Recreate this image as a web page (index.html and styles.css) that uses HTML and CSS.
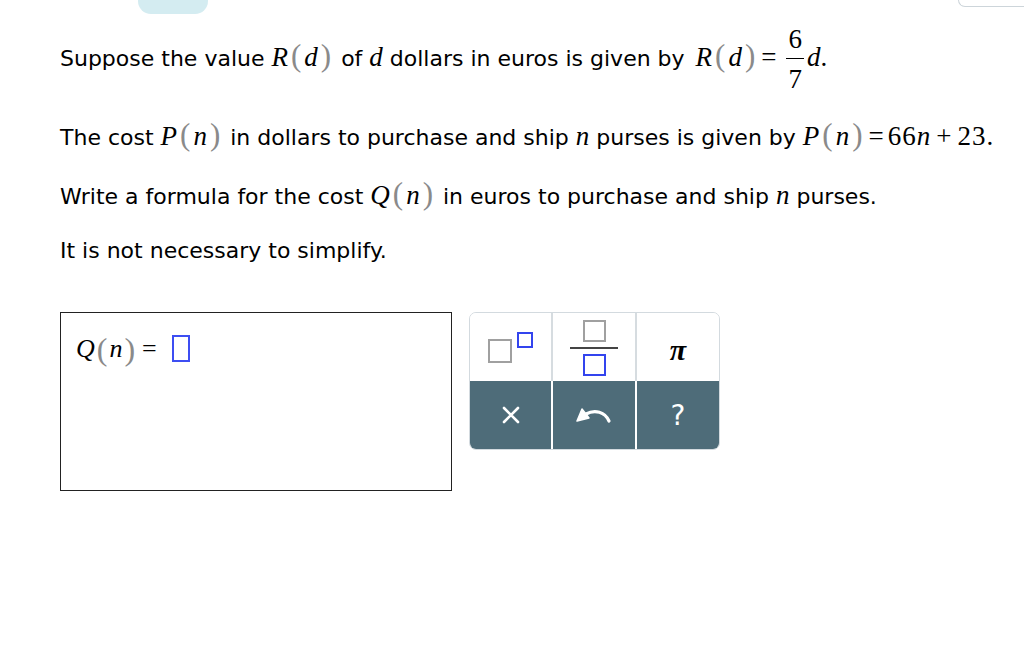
FILE: index.html
```html
<!DOCTYPE html>
<html>
<head>
<meta charset="utf-8">
<link rel="stylesheet" href="styles.css">
</head>
<body>
<header class="top">
  <div class="tab"></div>
  <div class="corner"></div>
</header>
<main class="question">
  <p class="line l1">Suppose the value <span class="m">R<span class="pr">(</span>d<span class="pr">)</span></span> of <span class="m">d</span> dollars in euros is given by <span class="m r2">R<span class="pr">(</span>d<span class="pr">)</span><span class="op">=</span><span class="frac"><span class="fn">6</span><span class="fd">7</span></span>d<span class="up">.</span></span></p>
  <p class="line l2">The cost <span class="m">P<span class="pr">(</span>n<span class="pr">)</span></span> in dollars to purchase and ship <span class="m">n</span> purses is given by <span class="m">P<span class="pr">(</span>n<span class="pr">)</span><span class="op">=</span><span class="up num">66</span>n<span class="op plus">+</span><span class="up num">23.</span></span></p>
  <p class="line l3">Write a formula for the cost <span class="m">Q<span class="pr">(</span>n<span class="pr">)</span></span> in euros to purchase and ship <span class="m">n</span> purses.</p>
  <p class="line l4">It is not necessary to simplify.</p>
</main>
<section class="answer-row">
  <div class="answer-box">
    <span class="am">Q</span><span class="apr">(</span><span class="am">n</span><span class="apr">)</span><span class="aeq">=</span><span class="slot"></span>
  </div>
  <div class="keypad">
    <div class="key top-key">
      <span class="sup-icon"><span class="gbox big"></span><span class="bbox small"></span></span>
    </div>
    <div class="key top-key div-l">
      <span class="frac-icon"><span class="gbox fbox"></span><span class="fbar"></span><span class="bbox fbox"></span></span>
    </div>
    <div class="key top-key div-l"><span class="pi">π</span></div>
    <div class="key dark-key">
      <svg width="18" height="18" viewBox="0 0 18 18"><path d="M2 2 L16 16 M16 2 L2 16" stroke="#fff" stroke-width="2.6" stroke-linecap="round"/></svg>
    </div>
    <div class="key dark-key div-w">
      <svg width="40" height="22" viewBox="0 0 40 22"><path d="M35 17 C 31 8, 21 5, 12 10" fill="none" stroke="#fff" stroke-width="3.2" stroke-linecap="round"/><polygon points="3,17 8,5 15,14" fill="#fff" stroke="#fff" stroke-width="1.5" stroke-linejoin="round"/></svg>
    </div>
    <div class="key dark-key div-w"><span class="qm">?</span></div>
  </div>
</section>
</body>
</html>
```
FILE: styles.css
```css
body {
  margin: 0;
  background: #fff;
  color: #000;
  font-family: "DejaVu Sans", Verdana, sans-serif;
  font-size: 22px;
}
.top {
  display: flex;
  justify-content: space-between;
  height: 14px;
}
.tab {
  margin-left: 138px;
  width: 70px;
  height: 14px;
  background: #d4ecf1;
  border-radius: 0 0 13px 13px;
}
.corner {
  width: 65px;
  height: 6px;
  border: 1px solid #cdd5da;
  border-top: none;
  border-right: none;
  border-radius: 0 0 0 8px;
}
.question {
  padding-left: 60px;
}
.line {
  margin: 0;
  line-height: 30px;
  white-space: nowrap;
}
.l1 { margin-top: 5px; line-height: 80px; }
.l2 { margin-top: 24px; }
.l3 { margin-top: 29px; }
.l4 { margin-top: 24px; }
.m {
  font-family: "Liberation Serif", "Times New Roman", serif;
  font-style: italic;
  font-size: 27px;
  line-height: 20px;
}
.r2 { margin-left: 4px; }
.up { font-style: normal; }
.num { letter-spacing: 1px; }
.pr {
  font-style: normal;
  color: #8a8a8a;
  font-size: 31px;
  line-height: 20px;
  padding: 0 3px;
}
.op {
  font-style: normal;
  padding: 0 4px 0 3px;
}
.plus { padding: 0 6px; }
.frac {
  display: inline-flex;
  flex-direction: column;
  align-items: center;
  vertical-align: middle;
  font-family: "Liberation Serif", "Times New Roman", serif;
  font-style: normal;
  font-size: 27px;
  margin: 0 3px 0 6px;
}
.fn, .fd {
  display: block;
  padding: 0 2px;
}
.fn { line-height: 38px; border-bottom: 1px solid #000; }
.fd { line-height: 40px; }
.answer-row {
  display: flex;
  align-items: flex-start;
  gap: 17px;
  padding-left: 60px;
  margin-top: 46px;
}
.answer-box {
  box-sizing: border-box;
  width: 392px;
  height: 179px;
  border: 1px solid #222;
  padding: 20px 0 0 15px;
  display: flex;
  align-items: flex-start;
}
.am {
  font-family: "Liberation Serif", "Times New Roman", serif;
  font-style: italic;
  font-size: 26px;
  line-height: 32px;
}
.apr {
  font-family: "Liberation Serif", serif;
  color: #8a8a8a;
  font-size: 32px;
  line-height: 32px;
  padding: 0 2px;
}
.aeq {
  font-family: "Liberation Serif", serif;
  font-size: 26px;
  line-height: 32px;
  padding: 0 15px 0 5px;
}
.slot {
  box-sizing: border-box;
  width: 18px;
  height: 27px;
  border: 2px solid #3d4ef2;
  margin-top: 2px;
}
.keypad {
  box-sizing: border-box;
  width: 251px;
  border: 1px solid #d3dadf;
  border-radius: 7px;
  overflow: hidden;
  display: grid;
  grid-template-columns: 81px 84px 1fr;
  grid-template-rows: 68px 68px;
}
.key {
  display: flex;
  align-items: center;
  justify-content: center;
}
.top-key { background: #fff; }
.dark-key { background: #4e6c79; }
.div-l { border-left: 2px solid #d6dce0; }
.div-w { border-left: 2px solid #fff; }
.gbox {
  box-sizing: border-box;
  border: 2px solid #a0a0a0;
  display: block;
}
.bbox {
  box-sizing: border-box;
  border: 2px solid #3344ee;
  display: block;
}
.sup-icon {
  display: flex;
  align-items: flex-start;
  gap: 5px;
}
.big { width: 24px; height: 24px; margin-top: 7px; }
.small { width: 16px; height: 16px; }
.frac-icon {
  display: flex;
  flex-direction: column;
  align-items: center;
  margin-top: 2px;
}
.fbox { width: 23px; height: 22px; }
.fbar {
  display: block;
  width: 48px;
  height: 2px;
  background: #444;
  margin: 5px 0 5px;
}
.pi {
  font-family: "Liberation Serif", serif;
  font-weight: bold;
  font-style: italic;
  font-size: 30px;
  line-height: 30px;
  margin-top: 6px;
}
.qm {
  color: #fff;
  font-family: "DejaVu Sans", sans-serif;
  font-size: 28px;
  line-height: 28px;
  margin-top: 2px;
}
```
